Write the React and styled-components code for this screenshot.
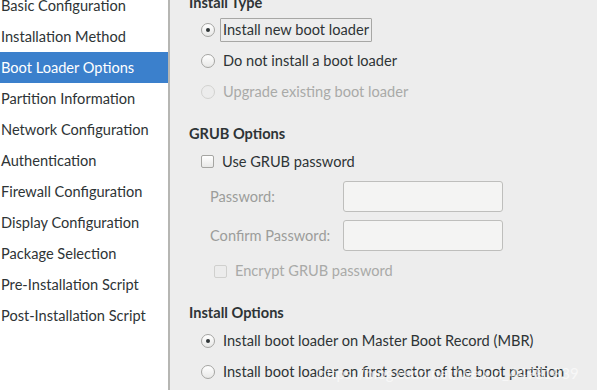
import React from 'react';
import styled, { createGlobalStyle } from 'styled-components';

const GlobalStyle = createGlobalStyle`
  html, body {
    margin: 0;
    padding: 0;
    overflow: hidden;
  }
  body {
    font-family: Lato, "Open Sans", sans-serif;
    font-size: 14.6px;
    color: #2e3436;
  }
`;

const sections = [
  'Basic Configuration',
  'Installation Method',
  'Boot Loader Options',
  'Partition Information',
  'Network Configuration',
  'Authentication',
  'Firewall Configuration',
  'Display Configuration',
  'Package Selection',
  'Pre-Installation Script',
  'Post-Installation Script',
];

function App() {
  return (
    <>
      <GlobalStyle />
      <Window>
        <Sidebar>
          <NavList>
            {sections.map((s) => (
              <NavItem key={s} $active={s === 'Boot Loader Options'}>{s}</NavItem>
            ))}
          </NavList>
        </Sidebar>
        <Content>
          <Section>
            <Header>Install Type</Header>
            <Option>
              <Radio $checked />
              <Label $focused>Install new boot loader</Label>
            </Option>
            <Option>
              <Radio />
              <Label>Do not install a boot loader</Label>
            </Option>
            <Option>
              <Radio $disabled />
              <Label $disabled>Upgrade existing boot loader</Label>
            </Option>
          </Section>

          <Section>
            <Header>GRUB Options</Header>
            <Option>
              <Check />
              <Label>Use GRUB password</Label>
            </Option>
            <FieldGrid>
              <FieldLabel>Password:</FieldLabel>
              <Entry />
              <FieldLabel>Confirm Password:</FieldLabel>
              <Entry />
            </FieldGrid>
            <Option $sub>
              <Check $disabled />
              <Label $disabled>Encrypt GRUB password</Label>
            </Option>
          </Section>

          <Section>
            <Header>Install Options</Header>
            <Option>
              <Radio $checked />
              <Label>Install boot loader on Master Boot Record (MBR)</Label>
            </Option>
            <Option>
              <Radio />
              <Label>Install boot loader on first sector of the boot partition</Label>
            </Option>
          </Section>
        </Content>
        <Watermark>https://blog.csdn.net/weixin_44981839</Watermark>
      </Window>
    </>
  );
}

const Window = styled.div`
  position: relative;
  display: flex;
  width: 597px;
  height: 390px;
  overflow: hidden;
  background: #ededed;
`;

const Sidebar = styled.nav`
  width: 168px;
  flex-shrink: 0;
  background: #ffffff;
  border-right: 2px solid #b6b6b3;
  overflow: hidden;
`;

const NavList = styled.div`
  display: flex;
  flex-direction: column;
  margin-top: -10px;
`;

const NavItem = styled.div`
  height: 31px;
  line-height: 31px;
  padding-left: 1px;
  white-space: nowrap;
  color: ${(p) => (p.$active ? '#ffffff' : '#2e3436')};
  background: ${(p) => (p.$active ? '#3b80cc' : 'transparent')};
`;

const Content = styled.main`
  flex: 1;
  display: flex;
  flex-direction: column;
  gap: 14.5px;
  padding-left: 19px;
  margin-top: -9.5px;
`;

const Section = styled.section`
  display: flex;
  flex-direction: column;
`;

const Header = styled.div`
  height: 24px;
  line-height: 24px;
  font-weight: bold;
  color: #2e3436;
`;

const Option = styled.div`
  display: flex;
  align-items: center;
  height: 31px;
  padding-left: ${(p) => (p.$sub ? '25px' : '12px')};
  margin-top: ${(p) => (p.$sub ? '5px' : '0')};
  white-space: nowrap;
`;

const Radio = styled.span`
  position: relative;
  width: 14px;
  height: 14px;
  box-sizing: border-box;
  border-radius: 50%;
  border: 1px solid ${(p) => (p.$disabled ? '#d2d2d0' : '#a5a5a2')};
  background: ${(p) =>
    p.$disabled ? '#ececec' : 'linear-gradient(#ffffff, #e8e8e7)'};
  flex-shrink: 0;
  margin-right: 8px;
  &::after {
    content: '';
    display: ${(p) => (p.$checked ? 'block' : 'none')};
    position: absolute;
    left: 4px;
    top: 4px;
    width: 4px;
    height: 4px;
    border-radius: 50%;
    background: #2e3436;
  }
`;

const Check = styled.span`
  width: 13px;
  height: 13px;
  box-sizing: border-box;
  border-radius: 2px;
  border: 1px solid ${(p) => (p.$disabled ? '#d0d0ce' : '#a5a5a2')};
  background: ${(p) =>
    p.$disabled ? '#ececec' : 'linear-gradient(#ffffff, #e8e8e7)'};
  flex-shrink: 0;
  margin-right: 8px;
`;

const Label = styled.span`
  color: ${(p) => (p.$disabled ? '#a9aaa8' : '#2e3436')};
  padding: ${(p) => (p.$focused ? '0 2px' : '0')};
  margin-left: ${(p) => (p.$focused ? '-3px' : '0')};
  line-height: 22px;
  border: ${(p) => (p.$focused ? '1px solid #a7a7a5' : 'none')};
  border-radius: 1px;
`;

const FieldGrid = styled.div`
  display: grid;
  grid-template-columns: 133px 160px;
  row-gap: 8px;
  align-items: center;
  padding-left: 21px;
  margin-top: 3.5px;
`;

const FieldLabel = styled.span`
  color: #9c9d9b;
  white-space: nowrap;
`;

const Entry = styled.div`
  height: 31px;
  box-sizing: border-box;
  border: 1px solid #bebebc;
  border-radius: 3px;
  background: #f4f4f3;
`;

const Watermark = styled.div`
  position: absolute;
  left: 318px;
  top: 364px;
  font-size: 15px;
  color: rgba(255, 255, 255, 0.6);
  white-space: nowrap;
  pointer-events: none;
`;

export default App;
